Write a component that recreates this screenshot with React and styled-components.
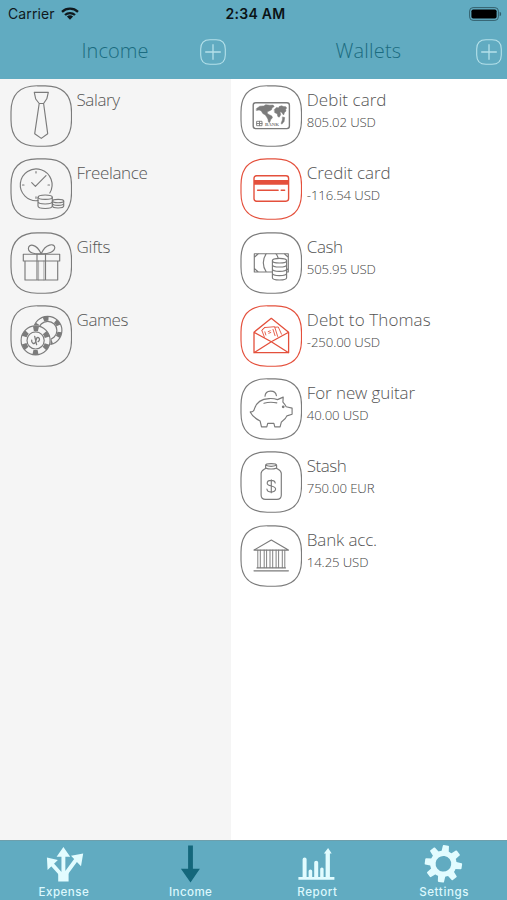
import React from "react";
import styled, { createGlobalStyle } from "styled-components";

const GlobalStyle = createGlobalStyle`
  * { box-sizing: border-box; }
  body { margin: 0; background: #fff; }
`;

const Screen = styled.div`
  width: 507px;
  height: 900px;
  display: flex;
  flex-direction: column;
  overflow: hidden;
  background: #fff;
  font-family: "Open Sans", "Noto Sans", sans-serif;
`;

const Header = styled.header`
  height: 79px;
  flex: none;
  background: #61abc1;
`;

const StatusBar = styled.div`
  height: 27px;
  display: grid;
  grid-template-columns: 1fr auto 1fr;
  align-items: center;
  padding: 0 5px 0 8px;
  font: 400 14px/27px Inter, sans-serif;
  color: #10191d;
`;

const Carrier = styled.div`
  display: flex;
  align-items: center;
  gap: 6.5px;
  letter-spacing: 0.1px;
`;

const Clock = styled.div`
  padding-left: 1px;
  font-weight: 600;
  letter-spacing: 0.3px;
  color: #0b1316;
`;

const BatteryIcon = styled.svg`
  justify-self: end;
`;

const Titles = styled.div`
  display: flex;
  height: 50px;
`;

const TitleCell = styled.div`
  width: ${(p) => p.$width}px;
  padding-right: ${(p) => p.$end}px;
  display: grid;
  grid-template-columns: 1fr auto;
  align-items: center;
`;

const Title = styled.h1`
  margin: 0;
  padding: 0 0 2px ${(p) => p.$indent}px;
  font-size: 20px;
  line-height: 44px;
  font-weight: 300;
  letter-spacing: ${(p) => p.$spacing}px;
  color: #1b6b80;
`;

const AddButton = styled.button`
  border: 0;
  padding: 0;
  background: none;
  display: flex;
`;

const Columns = styled.main`
  flex: 1;
  display: flex;
`;

const Column = styled.section`
  width: ${(p) => p.$width}px;
  padding: 6px 0 0 ${(p) => p.$inset}px;
  background: ${(p) => p.$fill};
`;

const Row = styled.div`
  height: 73.25px;
  display: flex;
  gap: 4.5px;
`;

const RowIcon = styled.svg`
  flex: none;
  color: ${(p) => (p.$debt ? "#e4503c" : "#7b7b7b")};
  fill: none;
  stroke: currentColor;
  stroke-width: 1.15;
  stroke-linejoin: round;
  stroke-linecap: round;
`;

const RowText = styled.div`
  padding-top: 4px;
  white-space: nowrap;
`;

const Name = styled.div`
  font-size: 17px;
  line-height: 22px;
  font-weight: 300;
  letter-spacing: ${(p) => p.$spacing ?? 0}px;
  color: #555;
`;

const Amount = styled.div`
  font-size: 13.2px;
  line-height: 22px;
  font-weight: 300;
  letter-spacing: -0.12px;
  color: #444;
`;

const TabBar = styled.nav`
  height: 60px;
  flex: none;
  display: grid;
  grid-template-columns: repeat(4, 1fr);
  border-top: 1px solid #6e9fac;
  background: #61abc1;
`;

const Tab = styled.div`
  display: flex;
  flex-direction: column;
  align-items: center;
  padding: 3px 0 0 1px;
  font: 500 11.6px/14px Inter, sans-serif;
  letter-spacing: ${(p) => p.$spacing}px;
  color: #dcf8fd;
`;

const TabIcon = styled.svg`
  display: block;
  margin-bottom: 1px;
  color: ${(p) => (p.$active ? "#14677b" : "#e2fcff")};
`;

const Plus = () => (
  <svg width="26" height="26" viewBox="0 0 26 26" fill="none" stroke="#b5e1ea" strokeWidth="1.1">
    <path d="M10 .7h6C22 .7 25.3 4 25.3 10v6c0 6-3.3 9.3-9.3 9.3h-6C4 25.3 .7 22 .7 16v-6C.7 4 4 .7 10 .7Z" />
    <path d="M13 5.2v15.6M5.2 13h15.6" strokeWidth="1.3" />
  </svg>
);

const Tie = () => (
  <path d="M24.3 7.3h14l-1.5 6.5-3.2 4.7h-4.4L25.7 14ZM29.2 18.5l-4.5 30.2 6.6 4.7 6.4-4.7-4.1-30.2" />
);

const ClockCoins = () => (
  <>
    <path d="M28 42.6A15.9 15.9 0 1 1 39.8 35M21.7 24.7l3.7 3.6L36 17.7M26 13.5v1.5M12.5 27H14M38 27h1.5M26 38.8v1.5" />
    <path d="M28 39.2v8.8c0 3.3 14.3 3.3 14.3 0v-8.8M28 43.5c0 3.3 14.3 3.3 14.3 0" />
    <ellipse cx="35.2" cy="39.2" rx="7.1" ry="2.2" />
    <path d="M42.5 43v5c0 2.6 11.2 2.6 11.2 0v-5M42.5 45.6c0 2.4 11.2 2.4 11.2 0" />
    <ellipse cx="48.1" cy="43" rx="5.6" ry="1.7" />
  </>
);

const Gift = () => (
  <>
    <path d="M13.3 22.2h36.4V29H13.3ZM15 29h32.7v19H15ZM27 22.2V48M35.5 22.2V48" />
    <path d="M28.6 29V48M33.9 29V48" strokeWidth=".6" />
    <path d="M31.2 21.8C25 22.2 18.4 21 18.4 16.5 18.5 11.3 26.5 11.5 31.2 21.8ZM31.2 21.8C38 22.2 44.6 20 44.8 15.5 44.6 11 35.5 11.5 31.2 21.8Z" />
  </>
);

const Chips = () => (
  <>
    <circle cx="37.7" cy="25.5" r="14.2" />
    <circle cx="37.7" cy="25.5" r="12" strokeWidth="4.4" strokeDasharray="5.2 7.366" strokeDashoffset="11" strokeLinecap="butt" />
    <circle cx="37.7" cy="25.5" r="9.2" />
    <circle cx="25.6" cy="35.4" r="15.2" fill="#f5f5f5" stroke="none" />
    <circle cx="25.6" cy="35.4" r="14.5" />
    <circle cx="25.6" cy="35.4" r="12" strokeWidth="5" strokeDasharray="5.2 7.366" strokeDashoffset="8.9" strokeLinecap="butt" />
    <circle cx="25.6" cy="35.4" r="8.6" />
    <path d="M21.7 35.2c-.6 3.2 2.7 4.6 3.8 1.7s1.1-5.3 3-4.3c1.7 1 1 3.4-.4 4M24.7 31.4l1.9 8.2" strokeWidth="1.3" />
  </>
);

const CardWord = styled.text`
  font: 700 5px "Liberation Serif", serif;
  fill: currentColor;
  stroke: none;
`;

const DebitCard = () => (
  <>
    <rect x="13.2" y="17.8" width="36.2" height="25.8" rx="2.5" strokeWidth="1.4" />
    <g fill="currentColor" strokeWidth=".5">
      <path d="M16.6 23.5l3.2-2.3 4-.3 1.9-1.2 4.2.5 3.2-.1 1.1 1.5-2.2 1.4-.4 1.7-2.3 1.2-1.6.7-.6 1.7 2.2 1.4 2.6 1.3.5 2-1.7 1.5-1 3-1.2-.4-.6-3-1.2-2-1.3-2-2.6-1.6-1.5-2.6-2.2-.9-2.5.4Z" />
      <path d="M34.4 24.4l2.2-2 1.9.5.6-1.3 2.3-.8 2.2.7 2.2.2.9 1.4-1 1.2.3 1.8-1.5 1.4-.9 2.5-1.2-1.5-.9-1.3-1.5-.4.7 2.9-1.5 2.5-1.4-.8-.6-2.6-2.3-1.1Z" />
      <path d="M42.7 32l2 .5-.6 4-2.3 2.7-.7-1 1.2-3Z" />
    </g>
    <path d="M17 36.3h5v4.4h-5ZM19.5 36.3v4.4M17 38.5h5" strokeWidth=".9" />
    <CardWord x="25" y="40.9" textLength="14" lengthAdjust="spacingAndGlyphs">BANK</CardWord>
  </>
);

const CreditCard = () => (
  <>
    <rect x="14" y="17.8" width="34.6" height="25.4" rx="2.6" strokeWidth="1.4" />
    <path d="M14 22h34.6v4.7H14Z" fill="currentColor" stroke="none" />
    <path d="M17.6 32.3h20.5M41.2 32.3h3.4" strokeWidth="1.5" />
  </>
);

const Cash = () => (
  <>
    <path d="M32 40H14.3V21.7h34V40h-1.4M14.3 25.2l4-3.5M14.3 36.5l4 3.5M44.3 21.7l4 3.5M48.3 36.5l-1.5 1.4M26.3 21.7c-4 5.5-4 12.8 0 18.3M35.8 21.7c1.2 1.4 2 2.8 2.3 4.2" />
    <ellipse cx="39.5" cy="28.7" rx="7.1" ry="2.3" />
    <path d="M32.4 28.7v17c0 3 14.2 3 14.2 0v-17M32.4 32.7c0 3.1 14.2 3.1 14.2 0M32.4 37c0 3.1 14.2 3.1 14.2 0M32.4 41.3c0 3.1 14.2 3.1 14.2 0" />
  </>
);

const Envelope = () => (
  <>
    <path d="M14 27.2v20.5h34.6V27.2L31.3 13.3ZM14 27.2l17.3 9.6 17.3-9.6M14 47.7l17.3-10.9 17.3 10.9" strokeWidth="1.3" />
    <path d="M24.4 32.2l-2.6-7 2.4-2.6 10.4-.9 3.1 9.8M35 22.2l3.3-.2 3.2 7.2M22 25.3l2.8-2.7M25.8 30l-.9-3.2M33 24.4l2 6.2" strokeWidth=".9" />
    <path d="M28.2 26.6l2-.8M28.8 28.2l2-.7" strokeWidth=".9" />
  </>
);

const PiggyBank = () => (
  <>
    <path d="M10.2 33.9c2.4.2 3.8-1 4.3-3.3C16.5 24.2 22.3 20.9 29 20.6c3.3-.2 5.9.1 8.5 1l5.7-2.5-.3 5c1.4 1.5 2.5 3 3.3 4.7l5.9 1.3v6.1l-5.2 1.7c-1 3-3.2 4.4-5.5 6l-1.3 4.9h-5.3l-.9-3.5h-6.2l-.9 3.5h-5.3l-1.4-5.8C16 41 11.9 37.3 10.2 33.9Z" />
    <path d="M24 25.3c4-1.3 8.4-1.4 12.8-.4M25 18.2c.4-6.6 10.4-6.8 11.4-.6" />
    <circle cx="43.2" cy="28.8" r=".8" fill="currentColor" />
  </>
);

const Jar = () => (
  <>
    <path d="M25.8 17.2c-2.2 1.6-4.7 2-4.7 5.3V44c0 3 1.5 4.4 4.5 4.4h11.2c3 0 4.5-1.4 4.5-4.4V22.5c0-3.3-2.6-3.7-4.8-5.3" />
    <path d="M25.6 14.2v2.9c3 1 8 1 11 0v-2.9M25.6 14.3c0-2.3 11-2.3 11 0-3 1.2-8 1.2-11 0Z" />
    <path d="M35.2 32c-.4-3.5-8-3.7-8 .2 0 3.7 8.4 2 8.4 5.8 0 4.2-8.4 4-8.7 0M31.3 28.7v13" />
  </>
);

const Bank = () => (
  <>
    <path d="M14 25.1l17.3-10 17.1 10Z" />
    <path d="M17.8 25.1v17.6M20.3 25.1v17.6M24.2 25.1v17.6M26.6 25.1v17.6M30 25.1v17.6M32.7 25.1v17.6M36.1 25.1v17.6M38.6 25.1v17.6M42.3 25.1v17.6M44.8 25.1v17.6" strokeWidth=".95" />
    <path d="M17 42.9h28.4M14 45.8h34.4" />
  </>
);

const Framed = ({ debt, children }) => (
  <RowIcon $debt={debt} width="62" height="62" viewBox="0 0 62 62">
    <path d="M27.2 .8H35.2C52.8 .8 61.5 9.5 61.5 27V35C61.5 52.5 52.8 61.2 35.2 61.2H27.2C9.7 61.2 1 52.5 1 35V27C1 9.5 9.7 .8 27.2 .8Z" />
    {children}
  </RowIcon>
);

const incomes = [
  { name: "Salary", icon: Tie, spacing: -0.4 },
  { name: "Freelance", icon: ClockCoins, spacing: -0.35 },
  { name: "Gifts", icon: Gift, spacing: -0.25 },
  { name: "Games", icon: Chips, spacing: -0.4 },
];

const wallets = [
  { name: "Debit card", amount: "805.02 USD", icon: DebitCard, spacing: 0.05 },
  { name: "Credit card", amount: "-116.54 USD", icon: CreditCard, debt: true, spacing: -0.05 },
  { name: "Cash", amount: "505.95 USD", icon: Cash, spacing: -0.4 },
  { name: "Debt to Thomas", amount: "-250.00 USD", icon: Envelope, debt: true, spacing: 0.1 },
  { name: "For new guitar", amount: "40.00 USD", icon: PiggyBank, spacing: -0.1 },
  { name: "Stash", amount: "750.00 EUR", icon: Jar, spacing: -0.5 },
  { name: "Bank acc.", amount: "14.25 USD", icon: Bank, spacing: -0.15 },
];

const Entry = ({ item }) => {
  const Icon = item.icon;
  return (
    <Row>
      <Framed debt={item.debt}>
        <Icon />
      </Framed>
      <RowText>
        <Name $spacing={item.spacing}>{item.name}</Name>
        {item.amount && <Amount>{item.amount}</Amount>}
      </RowText>
    </Row>
  );
};

const ExpenseGlyph = () => (
  <>
    <path d="M18.5 34V10M18.5 33L6 19M18.5 33L31 16" stroke="currentColor" strokeWidth="3.9" />
    <path d="M13.3 28h10.4v9.5H13.3ZM18.5 3l6.8 9.7H11.7ZM2 13.4l.7 12.6L13 16ZM38.3 9.5l-12.2 2.2 10 10.6Z" fill="currentColor" />
  </>
);

const IncomeGlyph = () => (
  <path d="M16.2 1.5h4.8v23.3h7L18.6 38.5 9 24.8h7.2Z" fill="currentColor" />
);

const ReportGlyph = () => (
  <path d="M.5 33h4.2V15.2q0-1.7 2-1.7t2 1.7V33h2V27q0-1.5 1.8-1.5t1.8 1.5v6h2V18.5q0-1.7 2-1.7t2 1.7V33h2v-8q0-1.5 1.7-1.5t1.7 1.5v8h2V9.5h-1.7L30.2 4l3.6 5.5H32V33h4.5v2.7H.5Z" fill="currentColor" />
);

const teeth = [0, 45, 90, 135, 180, 225, 270, 315];

const SettingsGlyph = () => (
  <g fill="currentColor" transform="rotate(8 18.5 19.8)">
    {teeth.map((angle) => (
      <path key={angle} d="M14.8 8.3 15.4 1.9q.1-.7.9-.7h4.4q.8 0 .9.7L22.2 8.3Z" transform={`rotate(${angle} 18.5 19.8)`} />
    ))}
    <circle cx="18.5" cy="19.8" r="10.5" fill="none" stroke="currentColor" strokeWidth="5.4" />
  </g>
);

const tabs = [
  { label: "Expense", icon: ExpenseGlyph, spacing: 0.45 },
  { label: "Income", icon: IncomeGlyph, spacing: 0.4, active: true },
  { label: "Report", icon: ReportGlyph, spacing: 0.55 },
  { label: "Settings", icon: SettingsGlyph, spacing: 0.6 },
];

export default function App() {
  return (
    <Screen>
      <GlobalStyle />
      <Header>
        <StatusBar>
          <Carrier>
            Carrier
            <svg width="18" height="13" viewBox="0 0 18 13" fill="none" stroke="#10191d" strokeWidth="2.3">
              <path d="M1 4.8C5.5.6 12.5.6 17 4.8M4 8C6.8 5.4 11.2 5.4 14 8" />
              <path d="M5.9 9.6q3.1-2.5 6.2 0L9 12.7Z" fill="#10191d" stroke="none" />
            </svg>
          </Carrier>
          <Clock>2:34 AM</Clock>
          <BatteryIcon width="33" height="14" viewBox="0 0 33 14">
            <rect x=".6" y=".6" width="28.8" height="12.8" rx="3.5" fill="none" stroke="#34606d" />
            <rect x="2.4" y="2.4" width="25.2" height="9.2" rx="1.8" fill="#000" />
            <path d="M30.6 4.8q1.6.5 1.6 2.2t-1.6 2.2Z" fill="#34606d" />
          </BatteryIcon>
        </StatusBar>
        <Titles>
          <TitleCell $width={231} $end={5}>
            <Title $indent={81.5} $spacing={0.05}>Income</Title>
            <AddButton aria-label="Add income"><Plus /></AddButton>
          </TitleCell>
          <TitleCell $width={276} $end={5.5}>
            <Title $indent={104.5} $spacing={0.2}>Wallets</Title>
            <AddButton aria-label="Add wallet"><Plus /></AddButton>
          </TitleCell>
        </Titles>
      </Header>
      <Columns>
        <Column $width={231} $inset={10} $fill="#f5f5f5">
          {incomes.map((item) => <Entry key={item.name} item={item} />)}
        </Column>
        <Column $width={276} $inset={9.3} $fill="#fff">
          {wallets.map((item) => <Entry key={item.name} item={item} />)}
        </Column>
      </Columns>
      <TabBar>
        {tabs.map(({ label, icon: Icon, spacing, active }) => (
          <Tab key={label} $spacing={spacing}>
            <TabIcon $active={active} width="40" height="40" viewBox="-0.9 0 40 40" fill="none">
              <Icon />
            </TabIcon>
            {label}
          </Tab>
        ))}
      </TabBar>
    </Screen>
  );
}
